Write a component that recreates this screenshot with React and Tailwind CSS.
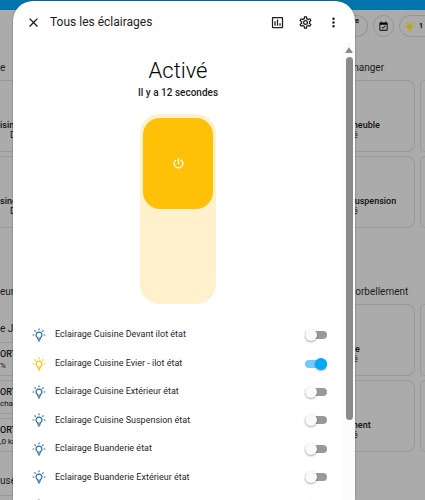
import { useState } from 'react';

const ICONS = {
  close:
    'M19,6.41L17.59,5L12,10.59L6.41,5L5,6.41L10.59,12L5,17.59L6.41,19L12,13.41L17.59,19L19,17.59L13.41,12L19,6.41Z',
  chart:
    'M9 17H7V10H9V17M13 17H11V7H13V17M17 17H15V13H17V17M19 19H5V5H19V19.1M19 3H5C3.9 3 3 3.9 3 5V19C3 20.1 3.9 21 5 21H19C20.1 21 21 20.1 21 19V5C21 3.9 20.1 3 19 3Z',
  cog:
    'M12,8A4,4 0 0,1 16,12A4,4 0 0,1 12,16A4,4 0 0,1 8,12A4,4 0 0,1 12,8M12,10A2,2 0 0,0 10,12A2,2 0 0,0 12,14A2,2 0 0,0 14,12A2,2 0 0,0 12,10M10,22C9.75,22 9.54,21.82 9.5,21.58L9.13,18.93C8.5,18.68 7.96,18.34 7.44,17.94L4.95,18.95C4.73,19.03 4.46,18.95 4.34,18.73L2.34,15.27C2.21,15.05 2.27,14.78 2.46,14.63L4.57,12.97L4.5,12L4.57,11L2.46,9.37C2.27,9.22 2.21,8.95 2.34,8.73L4.34,5.27C4.46,5.05 4.73,4.96 4.95,5.05L7.44,6.05C7.96,5.66 8.5,5.32 9.13,5.07L9.5,2.42C9.54,2.18 9.75,2 10,2H14C14.25,2 14.46,2.18 14.5,2.42L14.87,5.07C15.5,5.32 16.04,5.66 16.56,6.05L19.05,5.05C19.27,4.96 19.54,5.05 19.66,5.27L21.66,8.73C21.79,8.95 21.73,9.22 21.54,9.37L19.43,11L19.5,12L19.43,13L21.54,14.63C21.73,14.78 21.79,15.05 21.66,15.27L19.66,18.73C19.54,18.95 19.27,19.04 19.05,18.95L16.56,17.95C16.04,18.34 15.5,18.68 14.87,18.93L14.5,21.58C14.46,21.82 14.25,22 14,22H10M11.25,4L10.88,6.61C9.68,6.86 8.62,7.5 7.85,8.39L5.44,7.35L4.69,8.65L6.8,10.2C6.4,11.37 6.4,12.64 6.8,13.8L4.68,15.36L5.43,16.66L7.86,15.62C8.63,16.5 9.68,17.14 10.87,17.38L11.24,20H12.76L13.13,17.39C14.32,17.14 15.37,16.5 16.14,15.62L18.57,16.66L19.32,15.36L17.2,13.81C17.6,12.64 17.6,11.37 17.2,10.2L19.31,8.65L18.56,7.35L16.15,8.39C15.38,7.5 14.32,6.86 13.12,6.62L12.75,4H11.25Z',
  dots:
    'M12,16A2,2 0 0,1 14,18A2,2 0 0,1 12,20A2,2 0 0,1 10,18A2,2 0 0,1 12,16M12,10A2,2 0 0,1 14,12A2,2 0 0,1 12,14A2,2 0 0,1 10,12A2,2 0 0,1 12,10M12,4A2,2 0 0,1 14,6A2,2 0 0,1 12,8A2,2 0 0,1 10,6A2,2 0 0,1 12,4Z',
  power:
    'M16.56,5.44L15.11,6.89C16.84,7.94 18,9.83 18,12A6,6 0 0,1 12,18A6,6 0 0,1 6,12C6,9.83 7.16,7.94 8.88,6.88L7.44,5.44C5.36,6.88 4,9.28 4,12A8,8 0 0,0 12,20A8,8 0 0,0 20,12C20,9.28 18.64,6.88 16.56,5.44M13,3H11V13H13',
  bulbOutline:
    'M20,11H23V13H20V11M1,11H4V13H1V11M13,1V4H11V1H13M4.92,3.5L7.05,5.64L5.63,7.05L3.5,4.93L4.92,3.5M16.95,5.63L19.07,3.5L20.5,4.93L18.37,7.05L16.95,5.63M12,6A6,6 0 0,1 18,12C18,14.22 16.79,16.16 15,17.2V19A1,1 0 0,1 14,20H10A1,1 0 0,1 9,19V17.2C7.21,16.16 6,14.22 6,12A6,6 0 0,1 12,6M14,21V22A1,1 0 0,1 13,23H11A1,1 0 0,1 10,22V21H14M11,18H13V15.87C14.73,15.43 16,13.86 16,12A4,4 0 0,0 12,8A4,4 0 0,0 8,12C8,13.86 9.27,15.43 11,15.87V18Z',
  bulb:
    'M12,6A6,6 0 0,1 18,12C18,14.22 16.79,16.16 15,17.2V19A1,1 0 0,1 14,20H10A1,1 0 0,1 9,19V17.2C7.21,16.16 6,14.22 6,12A6,6 0 0,1 12,6M14,21V22A1,1 0 0,1 13,23H11A1,1 0 0,1 10,22V21H14M20,11H23V13H20V11M1,11H4V13H1V11M13,1V4H11V1H13M4.92,3.5L7.05,5.64L5.63,7.05L3.5,4.93L4.92,3.5M16.95,5.63L19.07,3.5L20.5,4.93L18.37,7.05L16.95,5.63Z',
  calendar:
    'M19,3H18V1H16V3H8V1H6V3H5A2,2 0 0,0 3,5V19A2,2 0 0,0 5,21H19A2,2 0 0,0 21,19V5A2,2 0 0,0 19,3M19,19H5V8H19V19M16.5,11.2L15.3,10L10.8,14.5L8.7,12.4L7.5,13.6L10.8,16.9L16.5,11.2Z',
};

const Icon = ({ name, className }) => (
  <svg viewBox="0 0 24 24" fill="currentColor" className={className} aria-hidden="true">
    <path d={ICONS[name]} />
  </svg>
);

const initialLights = [
  { id: 'devant', name: 'Eclairage Cuisine Devant ilot état', on: false },
  { id: 'evier', name: 'Eclairage Cuisine Evier - ilot état', on: true },
  { id: 'exterieur', name: 'Eclairage Cuisine Extérieur état', on: false },
  { id: 'suspension', name: 'Eclairage Cuisine Suspension état', on: false },
  { id: 'buanderie', name: 'Eclairage Buanderie état', on: false },
  { id: 'buanderie-ext', name: 'Eclairage Buanderie Extérieur état', on: false },
  { id: 'next', name: '', on: false },
];

const batteries = [
  { name: 'ORT', detail: '%' },
  { name: 'ORT', detail: 'char' },
  { name: 'ORT', detail: ',0 km' },
];

const SectionTitle = ({ children }) => (
  <h2 className="h-4 text-[10px] leading-4 text-[#1c1c1c]">{children}</h2>
);

// Cards that run off the left edge of the dashboard
const LeftCard = ({ name }) => (
  <div className="h-[72px] border-y border-[#999] pt-[39px] text-[9px] leading-[10px] text-[#111]">
    <p className="font-medium">{name}</p>
    <p className="pl-[10px]">D</p>
  </div>
);

const RightCards = ({ names }) => (
  <div className="mt-1 flex flex-col gap-1">
    {names.map(name => (
      <div key={name} className="flex gap-[5px]">
        <div className="h-[72px] flex-1 rounded-r-lg border border-l-0 border-[#999] pt-[39px] text-[9px] leading-[10px] text-[#111]">
          <p className="font-medium">{name}</p>
          <p className="pl-[3px]">é</p>
        </div>
        <div className="h-[72px] w-[5px] rounded-l-lg border border-r-0 border-[#999]" />
      </div>
    ))}
  </div>
);

const Dashboard = () => (
  <div className="h-full bg-[#ababab]">
    <div className="h-[10px] bg-[#0275ac]" />
    <div className="flex justify-between whitespace-nowrap">
      <div className="w-9 pt-[50px]">
        <SectionTitle>e</SectionTitle>
        <div className="mt-1 flex flex-col gap-1">
          <LeftCard name="isine" />
          <LeftCard name="sine" />
        </div>
        <div className="mt-14">
          <SectionTitle>eur</SectionTitle>
        </div>
        <div className="mt-[21px]">
          <SectionTitle>e JOUR</SectionTitle>
        </div>
        <div className="mt-[5px] flex flex-col gap-1">
          {batteries.map(battery => (
            <div key={battery.detail} className="h-[34px] border-y border-[#999] pt-[6px] text-[9px] leading-[11px] text-[#111]">
              <p className="font-medium">{battery.name}</p>
              <p className="text-[8px]">{battery.detail}</p>
            </div>
          ))}
        </div>
        <div className="mt-[21px] border-b border-[#999] pb-[6px]">
          <SectionTitle>use</SectionTitle>
        </div>
      </div>

      <div className="w-[75px] overflow-hidden">
        <div className="mt-[5px] flex gap-[5px]">
          <div className="h-[22px] w-[18px] shrink-0 rounded-r-full border border-l-0 border-[#969696] text-right text-[7px] leading-[11px] font-bold">
            <span className="pr-2">re</span>
          </div>
          <div className="flex h-[22px] w-[21px] shrink-0 items-center justify-center rounded-full border border-[#969696]">
            <Icon name="calendar" className="size-[11px]" />
          </div>
          <div className="flex h-[22px] w-10 shrink-0 items-center gap-1 rounded-full border border-[#969696] pl-1">
            <Icon name="bulb" className="size-[11px] text-[#b8a818]" />
            <span className="text-[7px] font-bold">1</span>
          </div>
        </div>
        <div className="mt-[23px]">
          <SectionTitle>manger</SectionTitle>
        </div>
        <RightCards names={['meuble', 'suspension']} />
        <div className="mt-14">
          <SectionTitle>corbellement</SectionTitle>
        </div>
        <RightCards names={['ue', 'ment']} />
      </div>
    </div>
  </div>
);

const LightRow = ({ light, onToggle }) => (
  <label className="flex items-center">
    <Icon
      name="bulbOutline"
      className={light.on ? 'size-[14px] text-[#ffc107]' : 'size-[14px] text-[#316a9f]'}
    />
    <span className="flex-1 pl-[9px] text-[9px] text-[#1f1f1f]">{light.name}</span>
    <input
      type="checkbox"
      checked={light.on}
      onChange={() => onToggle(light.id)}
      className="flex h-2 w-[22px] appearance-none items-center rounded-full bg-[#999] before:size-3 before:shrink-0 before:rounded-full before:bg-[#fafafa] before:shadow-[0_1px_2px_rgba(0,0,0,0.35)] checked:justify-end checked:bg-[#74cbf8] checked:before:bg-[#03a9f4]"
    />
  </label>
);

const App = () => {
  const [lights, setLights] = useState(initialLights);
  const anyOn = lights.some(light => light.on);

  const toggleLight = (id) => {
    setLights(lights.map(light => (light.id === id ? { ...light, on: !light.on } : light)));
  };

  const toggleAll = () => {
    setLights(lights.map(light => ({ ...light, on: !anyOn })));
  };

  return (
    <div className="relative h-screen overflow-hidden font-[Roboto,sans-serif]">
      <Dashboard />

      {/* Dialog */}
      <div className="absolute inset-0 pt-px pr-[70px] pl-[13px]">
        <div role="dialog" aria-label="Tous les éclairages" className="flex h-full flex-col overflow-hidden rounded-t-[20px] bg-white shadow-[0_0_2px_rgba(0,0,0,0.4)]">
          <header className="flex h-[42px] shrink-0 items-center pr-[14px] pl-[13px] text-[#1c1c1c]">
            <button type="button" aria-label="Fermer">
              <Icon name="close" className="size-[15px]" />
            </button>
            <h1 className="flex-1 pl-[9px] text-[12px]">Tous les éclairages</h1>
            <div className="flex gap-[13px]">
              <button type="button" aria-label="Historique">
                <Icon name="chart" className="size-[15px]" />
              </button>
              <button type="button" aria-label="Paramètres">
                <Icon name="cog" className="size-[15px]" />
              </button>
              <button type="button" aria-label="Menu">
                <Icon name="dots" className="size-[15px]" />
              </button>
            </div>
          </header>

          <div className="flex min-h-0 flex-1">
            <div className="flex-1 overflow-hidden">
              <div className="flex flex-col items-center pt-[14px]">
                <p className="text-[22px] leading-7 font-light text-black">{anyOn ? 'Activé' : 'Désactivé'}</p>
                <p className="text-[10px] leading-4 font-medium text-[#1c1c1c]">Il y a 12 secondes</p>
                <button
                  type="button"
                  role="switch"
                  aria-checked={anyOn}
                  aria-label="Tous les éclairages"
                  onClick={toggleAll}
                  className="mt-[13px] flex h-[190px] w-[76px] flex-col rounded-[20px] bg-[#fff1cc] px-[3px] py-1"
                >
                  <span className="flex h-1/2 w-full items-center justify-center rounded-[17px] bg-[#ffc107] text-white">
                    <Icon name="power" className="size-[15px]" />
                  </span>
                </button>
              </div>

              <div className="mt-[17px] grid h-[199px] grid-rows-7 pr-4 pl-[19px]">
                {lights.map(light => (
                  <LightRow key={light.id} light={light} onToggle={toggleLight} />
                ))}
              </div>
            </div>

            {/* Scrollbar */}
            <div className="flex w-3 flex-col items-center bg-[#fcfcfc]">
              <svg viewBox="0 0 8 6" className="mt-1 h-[6px] w-2 fill-[#8a8a8a]" aria-hidden="true">
                <path d="M4 0.3 7.6 5.2Q7.8 6 7 6H1Q0.2 6 0.4 5.2Z" />
              </svg>
              <div className="mt-1 h-[363px] w-[7px] rounded-full bg-[#8a8a8a]" />
            </div>
          </div>
        </div>
      </div>
    </div>
  );
};

export default App;
